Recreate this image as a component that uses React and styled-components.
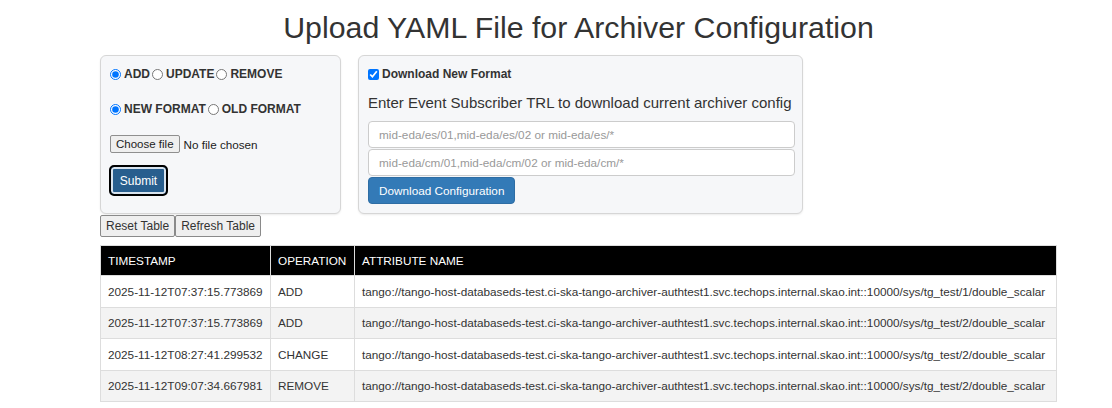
import React from "react";
import styled, { createGlobalStyle } from "styled-components";

const GlobalStyle = createGlobalStyle`
  body {
    margin: 0;
    background: #fff;
    font-family: "Liberation Sans", Arial, sans-serif;
    color: #333;
  }
`;

const rows = [
  ["2025-11-12T07:37:15.773869", "ADD", "tango://tango-host-databaseds-test.ci-ska-tango-archiver-authtest1.svc.techops.internal.skao.int::10000/sys/tg_test/1/double_scalar"],
  ["2025-11-12T07:37:15.773869", "ADD", "tango://tango-host-databaseds-test.ci-ska-tango-archiver-authtest1.svc.techops.internal.skao.int::10000/sys/tg_test/2/double_scalar"],
  ["2025-11-12T08:27:41.299532", "CHANGE", "tango://tango-host-databaseds-test.ci-ska-tango-archiver-authtest1.svc.techops.internal.skao.int::10000/sys/tg_test/2/double_scalar"],
  ["2025-11-12T09:07:34.667981", "REMOVE", "tango://tango-host-databaseds-test.ci-ska-tango-archiver-authtest1.svc.techops.internal.skao.int::10000/sys/tg_test/2/double_scalar"],
];

function App() {
  return (
    <Page>
      <GlobalStyle />
      <Title>Upload YAML File for Archiver Configuration</Title>
      <Panels>
        <div>
          <Well width="241px">
            <RadioRow>
              <Choice>
                <input type="radio" name="op" defaultChecked /> ADD
              </Choice>
              <Choice>
                <input type="radio" name="op" /> UPDATE
              </Choice>
              <Choice>
                <input type="radio" name="op" /> REMOVE
              </Choice>
            </RadioRow>
            <RadioRow>
              <Choice>
                <input type="radio" name="fmt" defaultChecked /> NEW FORMAT
              </Choice>
              <Choice>
                <input type="radio" name="fmt" /> OLD FORMAT
              </Choice>
            </RadioRow>
            <FileRow>
              <FakeButton>Choose file</FakeButton>
              <span>No file chosen</span>
            </FileRow>
            <SubmitButton>Submit</SubmitButton>
          </Well>
          <TableActions>
            <PlainButton>Reset Table</PlainButton>
            <PlainButton>Refresh Table</PlainButton>
          </TableActions>
        </div>
        <Well width="445px">
          <Choice>
            <input type="checkbox" defaultChecked /> Download New Format
          </Choice>
          <Lead>Enter Event Subscriber TRL to download current archiver config</Lead>
          <Field placeholder="mid-eda/es/01,mid-eda/es/02 or mid-eda/es/*" />
          <Field placeholder="mid-eda/cm/01,mid-eda/cm/02 or mid-eda/cm/*" />
          <PrimaryButton>Download Configuration</PrimaryButton>
        </Well>
      </Panels>
      <Table>
        <thead>
          <tr>
            <Th width="170px">TIMESTAMP</Th>
            <Th width="84px">OPERATION</Th>
            <Th>ATTRIBUTE NAME</Th>
          </tr>
        </thead>
        <tbody>
          {rows.map((r, i) => (
            <tr key={i}>
              <Td>{r[0]}</Td>
              <Td>{r[1]}</Td>
              <Td>{r[2]}</Td>
            </tr>
          ))}
        </tbody>
      </Table>
    </Page>
  );
}

const Page = styled.div`
  width: 957px;
  padding: 0 55px 0 100px;
`;

const Title = styled.h2`
  margin: 0;
  padding: 10px 0 9px;
  text-align: center;
  font-size: 30.3px;
  font-weight: 400;
  line-height: 36px;
  color: #333;
`;

const Panels = styled.div`
  display: flex;
  gap: 17px;
  align-items: flex-start;
`;

const Well = styled.div`
  box-sizing: border-box;
  width: ${(p) => p.width};
  height: 159px;
  padding: 9px 9px;
  background: #f6f7f9;
  border: 1px solid #d6d6d6;
  border-radius: 6px;
  box-shadow: 0 1px 2px rgba(0, 0, 0, 0.08);
  display: flex;
  flex-direction: column;
  align-items: flex-start;
`;

const RadioRow = styled.div`
  display: flex;
  gap: 2px;
  height: 35px;
  align-items: flex-start;
`;

const Choice = styled.label`
  display: flex;
  align-items: center;
  gap: 2px;
  font-size: 12px;
  font-weight: 700;
  color: #333;
  line-height: 18px;

  input {
    margin: 0 1px 0 0;
    width: 11px;
    height: 11px;
  }
`;

const FileRow = styled.div`
  display: flex;
  align-items: center;
  gap: 4px;
  font-size: 11.7px;
  color: #222;
  height: 18px;
`;

const FakeButton = styled.span`
  box-sizing: border-box;
  height: 18px;
  padding: 0 5px;
  border: 1px solid #8f8f8f;
  border-radius: 2px;
  background: #efefef;
  font-size: 11.5px;
  line-height: 16px;
  color: #222;
`;

const SubmitButton = styled.button`
  margin-top: 13px;
  box-sizing: border-box;
  width: 57px;
  height: 29px;
  background: #285e8e;
  color: #fff;
  border: 1px solid #204d74;
  border-radius: 4px;
  outline: 2px solid #000;
  outline-offset: -1px;
  box-shadow: inset 0 0 0 2px #d8e3ee;
  font-family: "Liberation Sans", Arial, sans-serif;
  font-size: 12px;
`;

const TableActions = styled.div`
  display: flex;
  margin-top: 1px;
`;

const PlainButton = styled.button`
  height: 22px;
  padding: 0 5px;
  background: #efefef;
  border: 1px solid #8a8a8a;
  border-radius: 2px;
  font-family: "Liberation Sans", Arial, sans-serif;
  font-size: 12px;
  color: #333;
`;

const Lead = styled.div`
  margin: 10px 0 8px;
  font-size: 15px;
  line-height: 20px;
  color: #333;
`;

const Field = styled.input`
  box-sizing: border-box;
  width: 427px;
  height: 28px;
  padding: 0 10px;
  margin-bottom: 1px;
  border: 1px solid #ccc;
  border-radius: 4px;
  background: #fff;
  font-family: "Liberation Sans", Arial, sans-serif;
  font-size: 11.75px;
  color: #555;

  &::placeholder {
    color: #999;
  }
`;

const PrimaryButton = styled.button`
  box-sizing: border-box;
  height: 28px;
  padding: 0 10px;
  background: #337ab7;
  color: #fff;
  border: 1px solid #2e6da4;
  border-radius: 4px;
  font-family: "Liberation Sans", Arial, sans-serif;
  font-size: 11.75px;
`;

const Table = styled.table`
  width: 957px;
  margin-top: 8px;
  border-collapse: collapse;
  border: 1px solid #ddd;
  font-size: 11.75px;
  color: #333;

  tbody tr:nth-child(even) {
    background: #f3f3f3;
  }
`;

const Th = styled.th`
  box-sizing: border-box;
  width: ${(p) => p.width || "auto"};
  height: 30px;
  padding: 0 7px;
  background: #000;
  color: #fff;
  font-weight: 400;
  text-align: left;
  border-left: 1px solid #ddd;
`;

const Td = styled.td`
  height: 30.5px;
  padding: 0 7px;
  border: 1px solid #ddd;
  white-space: nowrap;
`;

export default App;
